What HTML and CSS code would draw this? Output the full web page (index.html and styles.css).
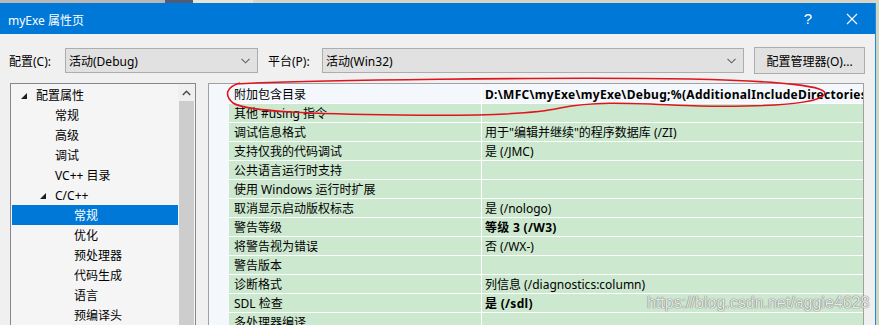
FILE: index.html
```html
<!DOCTYPE html>
<html>

<head>
    <title>myExe 属性页</title>
    <link rel="stylesheet" href="styles.css">
</head>

<body>
    <div class="top-strip">
        <span class="strip-a"></span><span class="strip-b"></span><span class="strip-c"></span>
    </div>
    <div class="dialog">
        <div class="titlebar">
            <span class="title">myExe 属性页</span>
            <span class="title-help">?</span>
            <span class="title-close">
                <svg width="12" height="12" viewBox="0 0 12 12">
                    <path d="M1 1 L11 11 M11 1 L1 11" stroke="#fff" stroke-width="1.1" fill="none" />
                </svg>
            </span>
        </div>
        <div class="content">
            <div class="config-row">
                <span class="config-label">配置(C):</span>
                <div class="combo combo-config">
                    <span>活动(Debug)</span>
                    <svg class="chevron" width="9" height="6" viewBox="0 0 9 6">
                        <path d="M0.5 0.8 L4.5 4.8 L8.5 0.8" stroke="#606060" stroke-width="1.1" fill="none" />
                    </svg>
                </div>
                <span class="config-label platform-label">平台(P):</span>
                <div class="combo combo-platform">
                    <span>活动(Win32)</span>
                    <svg class="chevron" width="9" height="6" viewBox="0 0 9 6">
                        <path d="M0.5 0.8 L4.5 4.8 L8.5 0.8" stroke="#606060" stroke-width="1.1" fill="none" />
                    </svg>
                </div>
                <button class="manager-btn">配置管理器(O)...</button>
            </div>

            <div class="main">
                <div class="tree">
                    <div class="tree-items">
                        <div class="tree-item lvl0"><span class="arrow"></span>配置属性</div>
                        <div class="tree-item lvl1">常规</div>
                        <div class="tree-item lvl1">高级</div>
                        <div class="tree-item lvl1">调试</div>
                        <div class="tree-item lvl1">VC++ 目录</div>
                        <div class="tree-item lvl1"><span class="arrow"></span>C/C++</div>
                        <div class="tree-item lvl2 selected">常规</div>
                        <div class="tree-item lvl2">优化</div>
                        <div class="tree-item lvl2">预处理器</div>
                        <div class="tree-item lvl2">代码生成</div>
                        <div class="tree-item lvl2">语言</div>
                        <div class="tree-item lvl2">预编译头</div>
                    </div>
                    <div class="scrollbar">
                        <div class="scroll-up">
                            <svg width="9" height="6" viewBox="0 0 9 6">
                                <path d="M0.8 5 L4.5 1.3 L8.2 5" stroke="#505050" stroke-width="1.6" fill="none" />
                            </svg>
                        </div>
                        <div class="scroll-thumb"></div>
                    </div>
                </div>

                <div class="grid">
                    <div class="grid-margin"></div>
                    <div class="grid-rows">
                        <div class="row first"><div class="name">附加包含目录</div><div class="value bold">D:\MFC\myExe\myExe\Debug;%(AdditionalIncludeDirectories)</div></div>
                        <div class="row"><div class="name">其他 #using 指令</div><div class="value"></div></div>
                        <div class="row"><div class="name">调试信息格式</div><div class="value">用于"编辑并继续"的程序数据库 (/ZI)</div></div>
                        <div class="row"><div class="name">支持仅我的代码调试</div><div class="value">是 (/JMC)</div></div>
                        <div class="row"><div class="name">公共语言运行时支持</div><div class="value"></div></div>
                        <div class="row"><div class="name">使用 Windows 运行时扩展</div><div class="value"></div></div>
                        <div class="row"><div class="name">取消显示启动版权标志</div><div class="value">是 (/nologo)</div></div>
                        <div class="row"><div class="name">警告等级</div><div class="value bold">等级 3 (/W3)</div></div>
                        <div class="row"><div class="name">将警告视为错误</div><div class="value">否 (/WX-)</div></div>
                        <div class="row"><div class="name">警告版本</div><div class="value"></div></div>
                        <div class="row"><div class="name">诊断格式</div><div class="value">列信息 (/diagnostics:column)</div></div>
                        <div class="row"><div class="name">SDL 检查</div><div class="value bold">是 (/sdl)</div></div>
                        <div class="row"><div class="name">多处理器编译</div><div class="value"></div></div>
                    </div>
                </div>
            </div>
        </div>
    </div>

    <!-- hand-drawn red mark around the first row -->
    <svg class="scribble" width="879" height="325" viewBox="0 0 879 325">
        <path d="M236 84 C300 80 560 77 690 79 C780 81 832 86 824 95 C816 104 770 107 700 106 C640 104 600 100 560 108 C530 115 470 116 400 115 C320 114 246 112 233 103 C224 95 226 87 240 83"
            stroke="#e0141c" stroke-width="1.6" fill="none" />
    </svg>

    <div class="watermark">https://blog.csdn.net/aggie4628</div>
</body>

</html>
```

FILE: styles.css
```css
html,
body {
    margin: 0;
    padding: 0;
}

body {
    width: 879px;
    height: 325px;
    overflow: hidden;
    position: relative;
    background-color: #cad8c4;
    font-family: "Noto Sans", "Noto Sans CJK SC", sans-serif;
    font-size: 12px;
    color: #000;
}

.top-strip {
    height: 3px;
    display: flex;
    background-color: #d9d4c4;
}

.strip-a {
    width: 165px;
    background-color: #b8b8b8;
}

.strip-b {
    width: 28px;
    background-color: #4e5c7a;
}

.strip-c {
    width: 60px;
    background-color: #e8e4d8;
}

.dialog {
    width: 875px;
    border-right: 1px solid #2a86d4;
    height: 322px;
    display: flex;
    flex-direction: column;
}

.titlebar {
    height: 31px;
    background-color: #0078d7;
    color: #fff;
    display: flex;
    align-items: center;
    padding-left: 8px;
}

.title {
    flex: 1;
    font-size: 12px;
    padding-top: 2px;
}

.title-help {
    font-family: "Liberation Sans", sans-serif;
    font-size: 15px;
    margin-right: 34px;
}

.title-close {
    display: flex;
    margin-right: 17px;
}

.content {
    flex: 1;
    background-color: #f0f0f0;
    overflow: hidden;
}

.config-row {
    display: flex;
    align-items: center;
    height: 27px;
    margin-top: 13px;
    padding-left: 9px;
}

.config-label {
    width: 56px;
}

.platform-label {
    width: 54px;
    margin-left: 10px;
}

.combo {
    background-color: #e1e1e1;
    border: 1px solid #adadad;
    display: flex;
    align-items: center;
    justify-content: space-between;
    padding: 0 7px 0 3px;
    box-sizing: border-box;
    height: 25px;
}

.combo-config {
    width: 193px;
}

.combo-platform {
    width: 422px;
}

.manager-btn {
    margin-left: 10px;
    width: 111px;
    height: 27px;
    background-color: #e1e1e1;
    border: 1px solid #adadad;
    font-family: inherit;
    font-size: 12px;
    color: #000;
    padding: 0;
}

.main {
    display: flex;
    gap: 12px;
    margin-top: 9px;
    padding-left: 10px;
}

.tree {
    width: 186px;
    height: 260px;
    box-sizing: border-box;
    border: 1px solid #828790;
    background-color: #f5f5f5;
    display: flex;
}

.tree-items {
    flex: 1;
    padding-top: 1px;
}

.tree-item {
    height: 20px;
    line-height: 22px;
    margin-left: 1px;
    white-space: nowrap;
    overflow: hidden;
}

.lvl0 {
    padding-left: 24px;
}

.lvl1 {
    padding-left: 43px;
}

.lvl2 {
    padding-left: 62px;
}

.tree-item.selected {
    background-color: #0078d7;
    color: #fff;
}

.arrow {
    display: inline-block;
    width: 0;
    height: 0;
    margin-left: -15px;
    margin-right: 9px;
    border-left: 6px solid transparent;
    border-bottom: 6px solid #1e1e1e;
    vertical-align: 1px;
}

.scrollbar {
    width: 17px;
    display: flex;
    flex-direction: column;
}

.scroll-up {
    height: 17px;
    background-color: #f0f0f0;
    display: flex;
    align-items: center;
    justify-content: center;
}

.scroll-thumb {
    flex: 1;
    margin: 0 1px 0 1px;
    background-color: #cdcdcd;
}

.grid {
    width: 656px;
    height: 260px;
    box-sizing: border-box;
    border: 1px solid #a0a0a0;
    background-color: #f4f7fc;
    display: flex;
}

.grid-margin {
    width: 20px;
}

.grid-rows {
    flex: 1;
    overflow: hidden;
    padding-top: 1px;
}

.row {
    display: flex;
    height: 18px;
    line-height: 20px;
    overflow: hidden;
    border-bottom: 1px solid #fff;
    background-color: #cce8cf;
    white-space: nowrap;
}

.row.first {
    background-color: #f4f7fc;
}

.name {
    width: 253px;
    padding-left: 5px;
    box-sizing: border-box;
    border-right: 1px solid #fff;
}

.value {
    flex: 1;
    padding-left: 3px;
    overflow: hidden;
}

.bold {
    font-weight: bold;
    letter-spacing: 0.3px;
}

.scribble {
    position: absolute;
    left: 0;
    top: 0;
    pointer-events: none;
}

.watermark {
    position: absolute;
    left: 647px;
    top: 294px;
    font-family: "Liberation Sans", sans-serif;
    font-size: 16px;
    color: rgba(255, 255, 255, 0.85);
    text-shadow: 0 0 1px #6e6e6e, 0 0 1px #6e6e6e;
}
```
